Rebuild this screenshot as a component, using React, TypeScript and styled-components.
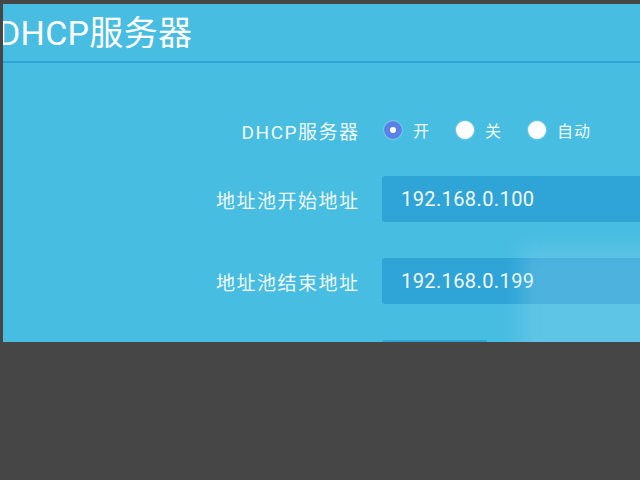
import React from "react";
import styled, { createGlobalStyle } from "styled-components";

const GlobalStyle = createGlobalStyle`
  html, body {
    margin: 0;
    padding: 0;
    background: #464646;
    font-family: Roboto, "Noto Sans CJK SC", "Noto Sans", sans-serif;
  }
`;

const Screen = styled.div`
  width: 640px;
  height: 480px;
  overflow: hidden;
  background: #464646;
  padding: 4px 0 0 3px;
  box-sizing: border-box;
`;

const Panel = styled.div`
  position: relative;
  height: 338px;
  background: #48bde2;
  overflow: hidden;
`;

const Header = styled.div`
  height: 57px;
  border-bottom: 2px solid #2fa5d7;
  display: flex;
  align-items: center;
`;

const Title = styled.h1`
  margin: 0 0 0 -5px;
  font-size: 34px;
  font-weight: 400;
  color: #ffffff;
  letter-spacing: 0.3px;
  line-height: 1;
`;

const Form = styled.div`
  display: flex;
  flex-direction: column;
  gap: 36px;
  padding-top: 44px;
`;

const Row = styled.div<{ $tight?: boolean }>`
  display: grid;
  grid-template-columns: 355px 1fr;
  column-gap: 24px;
  align-items: center;
  height: 46px;
  margin-bottom: ${(p) => (p.$tight ? "-13px" : "0")};
`;

const Label = styled.div`
  text-align: right;
  font-size: 19px;
  letter-spacing: 1.5px;
  color: #eef8fc;
  margin-right: -1.5px;
`;

const Field = styled.div<{ $width?: number }>`
  height: 46px;
  width: ${(p) => (p.$width ? `${p.$width}px` : "auto")};
  background: #2ea4d7;
  border-radius: 3px 0 0 3px;
  display: flex;
  align-items: center;
  padding-left: 19px;
  box-sizing: border-box;
  font-size: 20px;
  letter-spacing: 0.4px;
  color: #f4fbfe;
`;

const Radios = styled.div`
  display: flex;
  align-items: center;
  padding-left: 2px;
`;

const Option = styled.div`
  display: flex;
  align-items: center;
  gap: 11px;
  margin-right: 26px;
  font-size: 16px;
  letter-spacing: 1px;
  color: #eef8fc;
`;

const Dot = styled.span<{ $on?: boolean }>`
  width: 18px;
  height: 18px;
  border-radius: 50%;
  box-sizing: border-box;
  background: #ffffff;
  border: ${(p) => (p.$on ? "6px solid #5a82e6" : "none")};
  box-shadow: 0 0 2px rgba(255, 255, 255, 0.7);
`;

const Haze = styled.div`
  position: absolute;
  left: 518px;
  top: 244px;
  width: 160px;
  height: 110px;
  background: rgba(150, 215, 240, 0.3);
  filter: blur(10px);
`;

export default function App() {
  return (
    <Screen>
      <GlobalStyle />
      <Panel>
        <Header>
          <Title>DHCP服务器</Title>
        </Header>
        <Form>
          <Row $tight>
            <Label>DHCP服务器</Label>
            <Radios>
              <Option>
                <Dot $on />开
              </Option>
              <Option>
                <Dot />关
              </Option>
              <Option>
                <Dot />自动
              </Option>
            </Radios>
          </Row>
          <Row>
            <Label>地址池开始地址</Label>
            <Field>192.168.0.100</Field>
          </Row>
          <Row>
            <Label>地址池结束地址</Label>
            <Field>192.168.0.199</Field>
          </Row>
          <Row>
            <Label />
            <Field $width={105} />
          </Row>
        </Form>
        <Haze />
      </Panel>
    </Screen>
  );
}
